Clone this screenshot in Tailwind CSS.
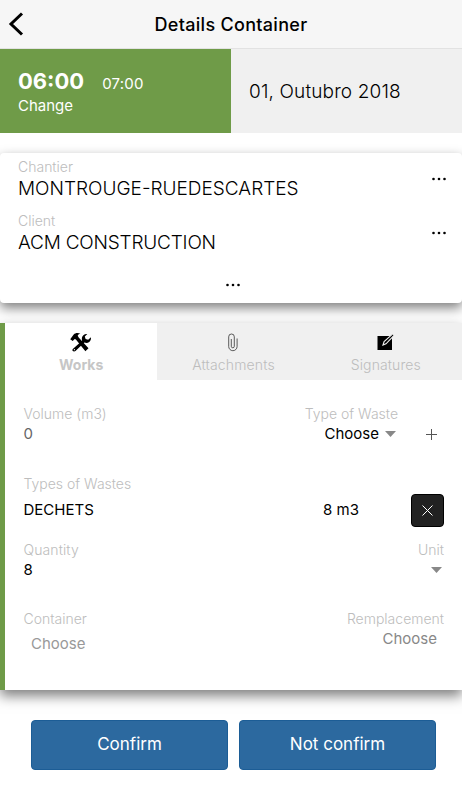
<!DOCTYPE html>
<html lang="en">

<head>
  <meta charset="UTF-8">
  <meta name="viewport" content="width=device-width, initial-scale=1.0">
  <title>Details Container</title>
  <script src="https://cdn.jsdelivr.net/npm/@tailwindcss/browser@4"></script>
</head>

<body class="h-[800px] overflow-hidden bg-white font-[Inter,sans-serif] text-black">

  <!-- Header -->
  <header class="grid h-[49px] grid-cols-[60px_1fr_60px] items-center border-b border-[#e2e2e2] bg-[#f6f6f6]">
    <button class="pl-2" aria-label="Back">
      <svg class="h-6 w-4" viewBox="0 0 16 24" fill="none" stroke="currentColor" stroke-width="3">
        <path d="M14 1.5 3 12l11 10.5" />
      </svg>
    </button>
    <h1 class="text-center text-[18px] font-medium tracking-[0.3px] whitespace-nowrap">Details Container</h1>
  </header>

  <!-- Time and date -->
  <section class="flex h-[84px]">
    <div class="w-[231px] bg-[#6f9b48] pt-[18px] pl-[18px] text-white">
      <div class="flex items-baseline gap-[18px] leading-7">
        <span class="text-[22px] font-bold">06:00</span>
        <span class="text-[15px] tracking-[0.2px]">07:00</span>
      </div>
      <p class="-mt-[2px] text-[15px] leading-5">Change</p>
    </div>
    <div class="flex flex-1 items-center bg-[#f0f0f0] pt-[2px] pl-[18px] text-[19px] font-light tracking-[0.15px]">01, Outubro 2018</div>
  </section>

  <!-- Site and client -->
  <section class="mt-5 h-[150px] rounded-sm bg-white pr-[15px] pl-[18px] shadow-[0_5px_12px_rgba(0,0,0,0.5)]">
    <div class="flex h-[54px] items-center justify-between">
      <div class="-mt-[3px]">
        <p class="text-[14px] leading-5 font-light text-[#bdbdbd]">Chantier</p>
        <p class="text-[19px] leading-6 font-light">MONTROUGE-RUEDESCARTES</p>
      </div>
      <svg class="-mt-[2px] h-1 w-4" viewBox="0 0 16 4"><circle cx="2.5" cy="2" r="1.3" /><circle cx="8" cy="2" r="1.3" /><circle cx="13.5" cy="2" r="1.3" /></svg>
    </div>
    <div class="flex h-[54px] items-center justify-between">
      <div class="-mt-[3px]">
        <p class="text-[14px] leading-5 font-light text-[#bdbdbd]">Client</p>
        <p class="text-[19px] leading-6 font-light tracking-[-0.2px]">ACM CONSTRUCTION</p>
      </div>
      <svg class="-mt-[2px] h-1 w-4" viewBox="0 0 16 4"><circle cx="2.5" cy="2" r="1.3" /><circle cx="8" cy="2" r="1.3" /><circle cx="13.5" cy="2" r="1.3" /></svg>
    </div>
    <div class="flex justify-center pt-[22px]">
      <svg class="h-1 w-4" viewBox="0 0 16 4"><circle cx="2.5" cy="2" r="1.3" /><circle cx="8" cy="2" r="1.3" /><circle cx="13.5" cy="2" r="1.3" /></svg>
    </div>
  </section>

  <section class="mt-5 h-[367px] border-l-[5px] border-[#6f9b48] bg-white shadow-[0_6px_12px_rgba(0,0,0,0.5)]">
    <!-- Tabs -->
    <nav class="grid h-[57px] grid-cols-3 text-center text-[14px] text-[#c6c6c6]">
      <button class="flex flex-col items-center bg-white pt-[9px] font-bold">
        <svg class="h-[21px] w-[22px] text-black" viewBox="0 0 22 21" fill="currentColor">
          <path d="M.2 7.2 3.7 2.5C5.3.7 8.3.5 10.4 1.8 8.7 2 8 2.8 7.7 3.7l1 1.7 9.8 10.8-3.1 3L5.9 7.6 4.7 7l-2 2z" />
          <path d="m2.8 17 9.3-8.3c-.6-2.2-.1-4.1 1.3-5.4 1.2-1.1 2.5-1.4 3.9-1.2l-2.5 2.5.8 2.5 2.6.7 2.7-2.5c.3 2-.3 3.5-1.7 4.6-1.4 1.2-3 1.3-4.8.7l-8.9 8.5c-1.8 1.3-4.1-.5-2.7-2.1z" />
          <circle cx="4.4" cy="17.7" r=".6" fill="white" />
        </svg>
        <span class="mt-[2px] leading-5">Works</span>
      </button>
      <button class="flex flex-col items-center bg-[#f0f0f0] pt-[9px]">
        <svg class="h-5 w-3 text-[#333]" viewBox="0 0 12 20" fill="none" stroke="currentColor" stroke-width=".8">
          <path d="M4.3 7v7.3a1.5 1.5 0 0 0 3 0V4.8a2.8 2.8 0 0 0-5.6 0v9.7a4.2 4.2 0 0 0 8.4 0V6.5" />
        </svg>
        <span class="mt-[3px] leading-5 font-light tracking-[0.15px] text-[#bdbdbd]">Attachments</span>
      </button>
      <button class="flex flex-col items-center bg-[#f0f0f0] pt-[9px]">
        <svg class="h-5 w-[18px] text-black" viewBox="0 0 18 20">
          <path d="M.5 4H15v14H.5z" fill="currentColor" />
          <path d="m6 13 1.1-3.5L15.2 2.3c1-.8 2.2.5 1.4 1.5L9 11.8z" fill="currentColor" stroke="#f0f0f0" stroke-width="1.1" />
        </svg>
        <span class="mt-[3px] leading-5 font-light tracking-[0.1px] text-[#bdbdbd]">Signatures</span>
      </button>
    </nav>

    <!-- Works form -->
    <div class="pr-[18px] pl-[18.5px] text-[15px]">
      <div class="flex h-[70px] justify-between pt-6">
        <div>
          <p class="text-[14px] leading-5 font-light text-[#bdbdbd]">Volume (m3)</p>
          <p class="leading-5 text-[#666]">0</p>
        </div>
        <div class="flex">
          <div>
            <p class="text-right text-[14px] leading-5 font-light text-[#bdbdbd]">Type of Waste</p>
            <p class="flex items-center justify-end gap-[6px] pr-[2px] leading-5">Choose
              <svg class="h-[6px] w-[11px] text-[#888]" viewBox="0 0 11 6" fill="currentColor"><path d="M0 0h11L5.5 6z" /></svg>
            </p>
          </div>
          <svg class="mt-[25px] mr-[7px] ml-[28px] size-[11px]" viewBox="0 0 11 11" stroke="#555" fill="none"><path d="M5.5 0v11M0 5.5h11" /></svg>
        </div>
      </div>

      <p class="pt-[24px] text-[14px] leading-5 font-light text-[#bdbdbd]">Types of Wastes</p>
      <div class="grid h-[32px] grid-cols-[299.5px_1fr_33px] items-center">
        <span>DECHETS</span>
        <span>8 m3</span>
        <button class="flex size-[33px] items-center justify-center rounded border border-black bg-[#222]" aria-label="Remove">
          <svg class="size-[11px]" viewBox="0 0 11 11" stroke="white" fill="none"><path d="m.5.5 10 10M10.5.5l-10 10" /></svg>
        </button>
      </div>

      <div class="flex h-[70px] justify-between pt-[14px]">
        <div>
          <p class="text-[14px] leading-5 font-light tracking-[0.1px] text-[#bdbdbd]">Quantity</p>
          <p class="leading-5">8</p>
        </div>
        <div class="flex flex-col items-end">
          <p class="text-[14px] leading-5 font-light text-[#bdbdbd]">Unit</p>
          <svg class="mt-[7px] mr-[2px] h-[6px] w-[11px] text-[#888]" viewBox="0 0 11 6" fill="currentColor"><path d="M0 0h11L5.5 6z" /></svg>
        </div>
      </div>

      <div class="flex justify-between pt-[13px]">
        <div>
          <p class="text-[14px] leading-5 font-light text-[#bdbdbd]">Container</p>
          <p class="pt-[5px] pl-[7.5px] leading-5 text-[#999]">Choose</p>
        </div>
        <div class="text-right">
          <p class="text-[14px] leading-5 font-light text-[#bdbdbd]">Remplacement</p>
          <p class="pr-[7px] leading-5 text-[#888]">Choose</p>
        </div>
      </div>
    </div>
  </section>

  <!-- Actions -->
  <footer class="mt-[30px] flex gap-[11px] pr-[26px] pl-[31px] text-[17px] text-white">
    <button class="h-[50px] flex-1 rounded border border-[#1c5d96] bg-[#2c699f]">Confirm</button>
    <button class="h-[50px] flex-1 rounded border border-[#1c5d96] bg-[#2c699f]">Not confirm</button>
  </footer>

</body>

</html>
